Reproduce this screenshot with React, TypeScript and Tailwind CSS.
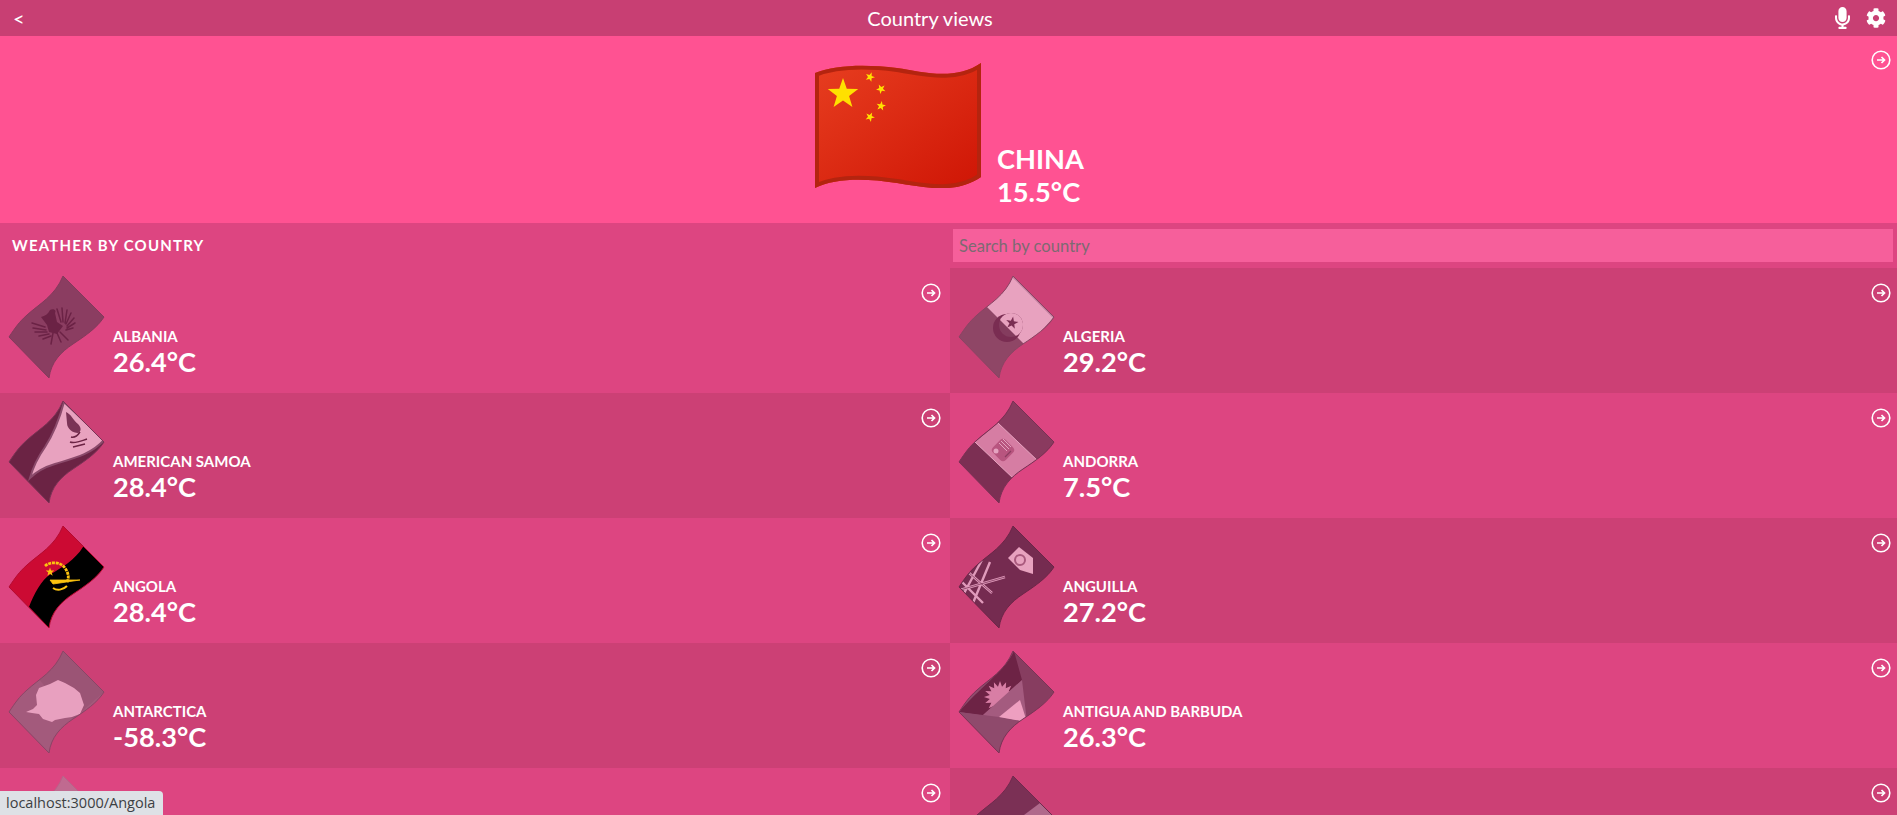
import React from 'react';
import { FaCog, FaMicrophone } from 'react-icons/fa';

const starPoints = (cx: number, cy: number, r: number, rot = 0, tips = 5, inner = 0.4) =>
  Array.from({ length: tips * 2 }, (_, i) => {
    const a = ((i * (180 / tips) - 90 + rot) * Math.PI) / 180;
    const d = i % 2 === 0 ? r : r * inner;
    return `${(cx + d * Math.cos(a)).toFixed(2)},${(cy + d * Math.sin(a)).toFixed(2)}`;
  }).join(' ');

const WAVE =
  'M2 65C8 56 12 50 20 43C32 32 48 24 56 4L97 45C90 56 78 64 66 72C54 80 44 90 42 106Z';

function WaveFlag({
  id,
  base,
  rim,
  children,
}: {
  id: string;
  base: string;
  rim: string;
  children?: React.ReactNode;
}) {
  return (
    <svg viewBox="0 0 100 110" className="w-[100px] h-[110px] shrink-0">
      <defs>
        <clipPath id={id}>
          <path d={WAVE} />
        </clipPath>
      </defs>
      <g clipPath={`url(#${id})`}>
        <rect width="100" height="110" fill={base} />
        {children}
      </g>
      <path d={WAVE} fill="none" stroke={rim} strokeWidth="1" />
    </svg>
  );
}

const Albania = () => (
  <WaveFlag id="albania" base="#8b3d61" rim="#833a5c">
    <g stroke="#6b2245" strokeWidth="1.5" strokeLinecap="round" fill="none">
      <path d="M50 37L54 50M55 36L56 50M60 38L58 51M64 41L59 52M67 46L60 54M68 51L60 56M66 56L59 58" />
      <path d="M25 51L38 55M26 56L39 58M28 60L40 60M32 64L42 62M36 67L44 64" />
      <path d="M46 61L44 72M50 61L54 70M53 60L61 68" />
    </g>
    <path d="M34 45C38 44 41 42 43 38C46 36 50 38 48 41L50 50L56 54L50 62L42 60L40 53Z" fill="#6b2245" />
  </WaveFlag>
);

const Algeria = () => (
  <WaveFlag id="algeria" base="#8f4666" rim="#8a4463">
    <defs>
      <clipPath id="algeria-light">
        <path d="M30 35L56 4L97 45L70 75Z" />
      </clipPath>
    </defs>
    <path d="M30 35L56 4L97 45L70 75Z" fill="#e8a2bf" />
    <path d="M56 4L97 45" stroke="#c27f9f" strokeWidth="3" fill="none" />
    <circle cx="50" cy="56" r="14" fill="#7a2d52" />
    <circle cx="54" cy="53" r="12" fill="#843c5e" />
    <g clipPath="url(#algeria-light)">
      <circle cx="54" cy="53" r="12" fill="#e8a2bf" />
    </g>
    <polygon points={starPoints(55, 51, 6.5, 10)} fill="#7a2d52" />
  </WaveFlag>
);

const AmericanSamoa = () => (
  <WaveFlag id="samoa" base="#6b2344" rim="#7b3356">
    <path
      d="M57 5C53 20 47 36 38 50C31 60 26 70 23 81C30 74 38 70 48 67C64 62 84 58 97 43Z"
      fill="#e8a2bf"
      stroke="#8b4a6b"
      strokeWidth="2"
    />
    <path d="M59 15C64 17 66 23 71 27C74 30 75 34 71 36C66 36 60 32 60 26Z" fill="#7b3356" />
    <path d="M63 45C68 47 74 44 80 42M64 40C68 41 71 38 73 35M66 50L78 47" stroke="#6b2344" strokeWidth="1.5" fill="none" />
  </WaveFlag>
);

const Andorra = () => (
  <WaveFlag id="andorra" base="#7c2f53" rim="#7a3054">
    <path d="M41 26L56 4L97 45L82 65Z" fill="#8a3a5f" />
    <path d="M41 26L82 65L58 83L18 45Z" fill="#d67da3" />
    <path d="M41 26L82 65M18 45L58 83" stroke="#e7a5c1" strokeWidth="1" />
    <rect x="37" y="44" width="18" height="18" rx="4" fill="#b8557f" transform="rotate(45 46 53)" />
    <path d="M46 42L54 50M44 44L52 52M42 46L50 54" stroke="#e5a3c0" strokeWidth="1" />
    <circle cx="39" cy="54" r="2.5" fill="#e5a3c0" />
    <path d="M50 58L54 54M48 60L52 56" stroke="#8b3d61" strokeWidth="1.2" />
  </WaveFlag>
);

const Angola = () => (
  <WaveFlag id="angola" base="#cc0a33" rim="#b40a30">
    <path d="M76 25C68 38 54 46 44 52C34 58 27 72 22 85L42 106L100 48L80 20Z" fill="#000000" />
    <path
      d="M38 44C44 39 54 40 58 46C62 52 62 56 60 60"
      fill="none"
      stroke="#fcc30f"
      strokeWidth="2.8"
      strokeDasharray="3 0.8"
    />
    <path d="M43 58L73 58L46 62Z" fill="#fcc30f" stroke="#fcc30f" strokeWidth="0.8" />
    <path d="M46 66C50 69 56 68 60 64" stroke="#fcc30f" strokeWidth="2" fill="none" />
    <polygon points={starPoints(43, 50, 4.5)} fill="#fcc30f" />
  </WaveFlag>
);

const Anguilla = () => (
  <WaveFlag id="anguilla" base="#752b50" rim="#6b2547">
    <g stroke="#e09abb" strokeWidth="2.4" fill="none">
      <path d="M11 50L35 71M16 81L33 40M3 68L48 55M5 75L26 36M3 58L26 81" />
    </g>
    <g stroke="#752b50" strokeWidth="0.7" fill="none">
      <path d="M11 50L35 71M3 68L48 55" />
    </g>
    <path d="M51 36L62 25L76 36L76 52L63 48Z" fill="#e8a2bf" />
    <circle cx="63" cy="38" r="5" fill="none" stroke="#a9597d" strokeWidth="2" />
  </WaveFlag>
);

const Antarctica = () => (
  <WaveFlag id="antarctica" base="#a35a7c" rim="#8a4566">
    <path d="M56 4L97 45L66 72L30 30Z" fill="#95506f" opacity="0.55" />
    <polygon
      points="19,65 26,62 30,58 29,48 32,41 43,37 51,33 58,36 67,41 73,46 77,58 73,67 65,70 58,71 48,73 45,75 36,72 32,67 25,66"
      fill="#e8a0bf"
    />
  </WaveFlag>
);

const Antigua = () => (
  <WaveFlag id="antigua" base="#8f4a6c" rim="#7b3356">
    <path d="M57 4L97 45L70 75Z" fill="#873d60" />
    <path d="M2 65C20 43 48 24 57 4L65 33L26 68Z" fill="#6d2345" />
    <polygon points={starPoints(43, 50, 16, 0, 16, 0.65)} fill="#d87ea5" />
    <path d="M65 33L70 75L42 70L26 68Z" fill="#a45b7f" />
    <path d="M63 53L70 75L42 70Z" fill="#ee9fc0" />
    <path d="M2 65L70 75L42 106Z" fill="#8f4a6c" />
  </WaveFlag>
);

const Argentina = () => (
  <WaveFlag id="argentina" base="#c06a90" rim="#b86389">
    <path d="M71 18L97 45L66 72L45 45Z" fill="#dd9cb8" />
  </WaveFlag>
);

const Armenia = () => (
  <WaveFlag id="armenia" base="#7b3055" rim="#70294d">
    <path d="M83 31L100 48L70 80L55 52Z" fill="#b06a8c" />
  </WaveFlag>
);

function ChinaFlag() {
  const wave =
    'M0 10C20 2 50 1 82 5C108 9 140 18 166 0L166 114C140 132 108 124 82 120C50 115 20 115 0 125Z';
  return (
    <svg viewBox="0 0 166 125" className="w-[166px] h-[125px] shrink-0">
      <defs>
        <linearGradient id="china" x1="0" y1="0" x2="1" y2="1">
          <stop offset="0" stopColor="#e73e20" />
          <stop offset="1" stopColor="#cf1505" />
        </linearGradient>
        <clipPath id="chinaClip">
          <path d={wave} />
        </clipPath>
      </defs>
      <g clipPath="url(#chinaClip)">
        <rect width="166" height="125" fill="url(#china)" />
        <path d={wave} fill="none" stroke="#b4240f" strokeWidth="8" />
      </g>
      <polygon points={starPoints(28, 31, 16)} fill="#ffe000" />
      <polygon points={starPoints(55, 14, 5, 20)} fill="#ffe000" />
      <polygon points={starPoints(66, 26, 5, 45)} fill="#ffe000" />
      <polygon points={starPoints(66, 43, 5, 10)} fill="#ffe000" />
      <polygon points={starPoints(55, 54, 5, 25)} fill="#ffe000" />
    </svg>
  );
}

function GoIcon({ className }: { className: string }) {
  return (
    <svg viewBox="0 0 20 20" className={`absolute w-5 h-5 ${className}`}>
      <circle cx="10" cy="10" r="8.8" fill="none" stroke="#ffffff" strokeWidth="1.6" />
      <path d="M6 10H13M10.5 7L13.5 10L10.5 13" fill="none" stroke="#ffffff" strokeWidth="1.7" />
    </svg>
  );
}

type Country = {
  name?: string;
  temp?: string;
  flag: React.ReactNode;
};

const countries: Country[] = [
  { name: 'ALBANIA', temp: '26.4°C', flag: <Albania /> },
  { name: 'ALGERIA', temp: '29.2°C', flag: <Algeria /> },
  { name: 'AMERICAN SAMOA', temp: '28.4°C', flag: <AmericanSamoa /> },
  { name: 'ANDORRA', temp: '7.5°C', flag: <Andorra /> },
  { name: 'ANGOLA', temp: '28.4°C', flag: <Angola /> },
  { name: 'ANGUILLA', temp: '27.2°C', flag: <Anguilla /> },
  { name: 'ANTARCTICA', temp: '-58.3°C', flag: <Antarctica /> },
  { name: 'ANTIGUA AND BARBUDA', temp: '26.3°C', flag: <Antigua /> },
  { flag: <Argentina /> },
  { flag: <Armenia /> },
];

function CountryRow({ country, dark, left }: { country: Country; dark: boolean; left: boolean }) {
  return (
    <div
      className={`relative flex h-[125px] pl-[7px] pt-1 ${dark ? 'bg-[#cc4075]' : 'bg-[#dd4581]'}`}
    >
      {country.flag}
      {country.name && (
        <div className="ml-[6px] pt-[53px] text-white">
          <div className="text-[15px] leading-[22px] font-bold">{country.name}</div>
          <div className="text-[27.2px] leading-[30px] font-bold">{country.temp}</div>
        </div>
      )}
      <GoIcon className={left ? 'top-[15px] right-[9px]' : 'top-[15px] right-[6px]'} />
    </div>
  );
}

export default function App() {
  return (
    <div className="relative h-screen overflow-hidden bg-[#dd4581] font-[Lato,sans-serif] text-white">
      <header className="flex items-center h-9 bg-[#c83f73]">
        <div className="w-[30px] pl-[13px] text-[20px] leading-none font-medium">&lt;</div>
        <div className="flex-1 text-center text-[20px] leading-none">Country views</div>
        <div className="w-[67px] pl-[5px] flex items-center gap-[16px]">
          <FaMicrophone className="w-[15px] h-[22px]" />
          <FaCog className="w-[20px] h-[20px]" />
        </div>
      </header>

      <section className="relative flex justify-center h-[187px] pt-[27px] bg-[#ff5292]">
        <div className="flex ml-[2px]">
          <ChinaFlag />
          <div className="ml-4 pt-[79px] text-[27.2px] leading-[33px] font-bold">
            <div>CHINA</div>
            <div>15.5°C</div>
          </div>
        </div>
        <GoIcon className="top-[14px] right-[6px]" />
      </section>

      <div className="grid grid-cols-[950px_947px]">
        <div className="flex items-center h-[45px] pl-3 text-[15px] font-bold tracking-[1.2px]">
          WEATHER BY COUNTRY
        </div>
        <div className="pt-[6px] pl-[3px] pr-[4px]">
          <input
            placeholder="Search by country"
            className="w-full h-[33px] px-[6px] bg-[#f65f9b] text-[16.6px] outline-none placeholder:text-[#7d6a72]"
          />
        </div>
        {countries.map((country, i) => (
          <CountryRow
            key={i}
            country={country}
            left={i % 2 === 0}
            dark={(Math.floor(i / 2) + (i % 2)) % 2 === 1}
          />
        ))}
      </div>

      <div className="absolute left-0 bottom-0 h-6 w-[163px] pl-[6px] flex items-center rounded-tr-[4px] bg-[#dee1e6] text-[#3c4043] text-[14.5px] font-['Open_Sans',sans-serif]">
        localhost:3000/Angola
      </div>
    </div>
  );
}
